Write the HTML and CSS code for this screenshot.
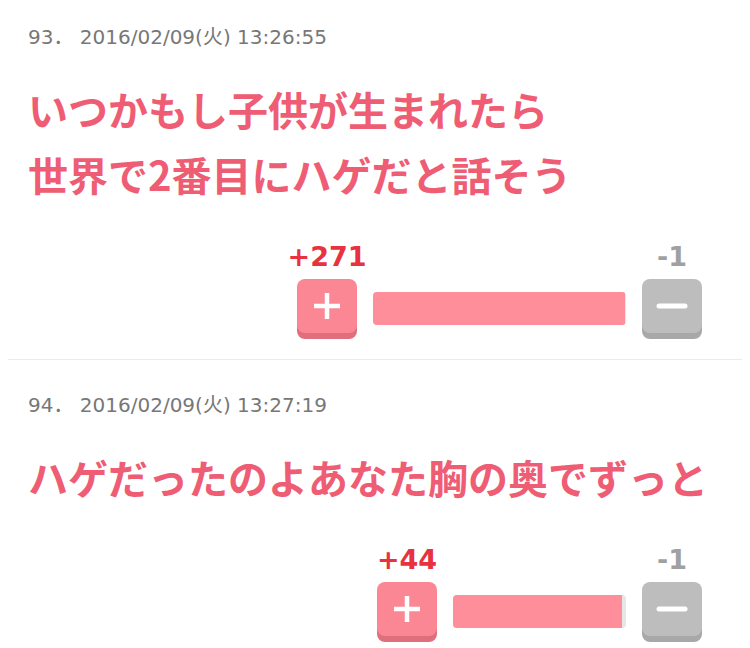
FILE: index.html
```html
<!DOCTYPE html>
<html lang="ja">
<head>
  <meta charset="UTF-8">
  <title>コメント</title>
  <link rel="stylesheet" href="styles.css">
</head>
<body>
  <div class="thread">

    <div class="post">
      <div class="meta">93． 2016/02/09(火) 13:26:55</div>
      <div class="body">いつかもし子供が生まれたら<br>世界で2番目にハゲだと話そう</div>
      <div class="vote">
        <div class="vote-col">
          <span class="count good">+271</span>
          <button class="btn btn-good">
            <svg width="28" height="28" viewBox="0 0 28 28"><path d="M14 1v26M1 14h26" stroke="#fff" stroke-width="4.5"/></svg>
          </button>
        </div>
        <div class="bar" style="width:253px"><div class="fill" style="width:99.6%"></div></div>
        <div class="vote-col">
          <span class="count bad">-1</span>
          <button class="btn btn-bad">
            <svg width="32" height="8" viewBox="0 0 32 8"><path d="M3 4h26" stroke="#fff" stroke-width="5" stroke-linecap="round"/></svg>
          </button>
        </div>
      </div>
    </div>

    <div class="post">
      <div class="meta">94． 2016/02/09(火) 13:27:19</div>
      <div class="body">ハゲだったのよあなた胸の奥でずっと</div>
      <div class="vote">
        <div class="vote-col">
          <span class="count good">+44</span>
          <button class="btn btn-good">
            <svg width="28" height="28" viewBox="0 0 28 28"><path d="M14 1v26M1 14h26" stroke="#fff" stroke-width="4.5"/></svg>
          </button>
        </div>
        <div class="bar" style="width:173px"><div class="fill" style="width:97.8%"></div></div>
        <div class="vote-col">
          <span class="count bad">-1</span>
          <button class="btn btn-bad">
            <svg width="32" height="8" viewBox="0 0 32 8"><path d="M3 4h26" stroke="#fff" stroke-width="5" stroke-linecap="round"/></svg>
          </button>
        </div>
      </div>
    </div>

  </div>
</body>
</html>
```

FILE: styles.css
```css
body {
  margin: 0;
  background: #fff;
  font-family: "DejaVu Sans", "Noto Sans CJK JP", sans-serif;
}
.thread {
  padding: 0 8px;
}
.post {
  padding: 33px 20px 20px;
  border-bottom: 1px solid #ebebeb;
}
.post:first-child {
  padding-top: 25px;
}
.meta {
  font-size: 20px;
  line-height: 24px;
  color: #777;
}
.body {
  margin-top: 28px;
  font-family: "Noto Sans CJK JP", sans-serif;
  font-weight: bold;
  font-size: 40px;
  line-height: 65px;
  color: #ee5d74;
  white-space: nowrap;
}
.vote {
  display: flex;
  justify-content: flex-end;
  align-items: flex-end;
  gap: 16px;
  margin-top: 35px;
  padding-right: 20px;
}
.vote-col {
  width: 60px;
  display: flex;
  flex-direction: column;
  align-items: center;
}
.count {
  font-weight: bold;
  font-size: 27px;
  line-height: 30px;
  white-space: nowrap;
  margin-bottom: 7px;
}
.count.good {
  color: #e8323f;
}
.count.bad {
  color: #a0a0a0;
}
.btn {
  width: 60px;
  height: 54px;
  margin-bottom: 6px;
  padding: 0;
  border: none;
  border-radius: 8px;
  display: flex;
  align-items: center;
  justify-content: center;
  cursor: pointer;
}
.btn-good {
  background: #fb8795;
  box-shadow: 0 6px 0 #e06f7e;
}
.btn-bad {
  background: #bdbdbd;
  box-shadow: 0 6px 0 #a8a8a8;
}
.bar {
  height: 33px;
  margin-bottom: 14px;
  background: #e6e6e6;
  border-radius: 4px;
  overflow: hidden;
}
.fill {
  height: 100%;
  background: #ff8e9b;
}
```
